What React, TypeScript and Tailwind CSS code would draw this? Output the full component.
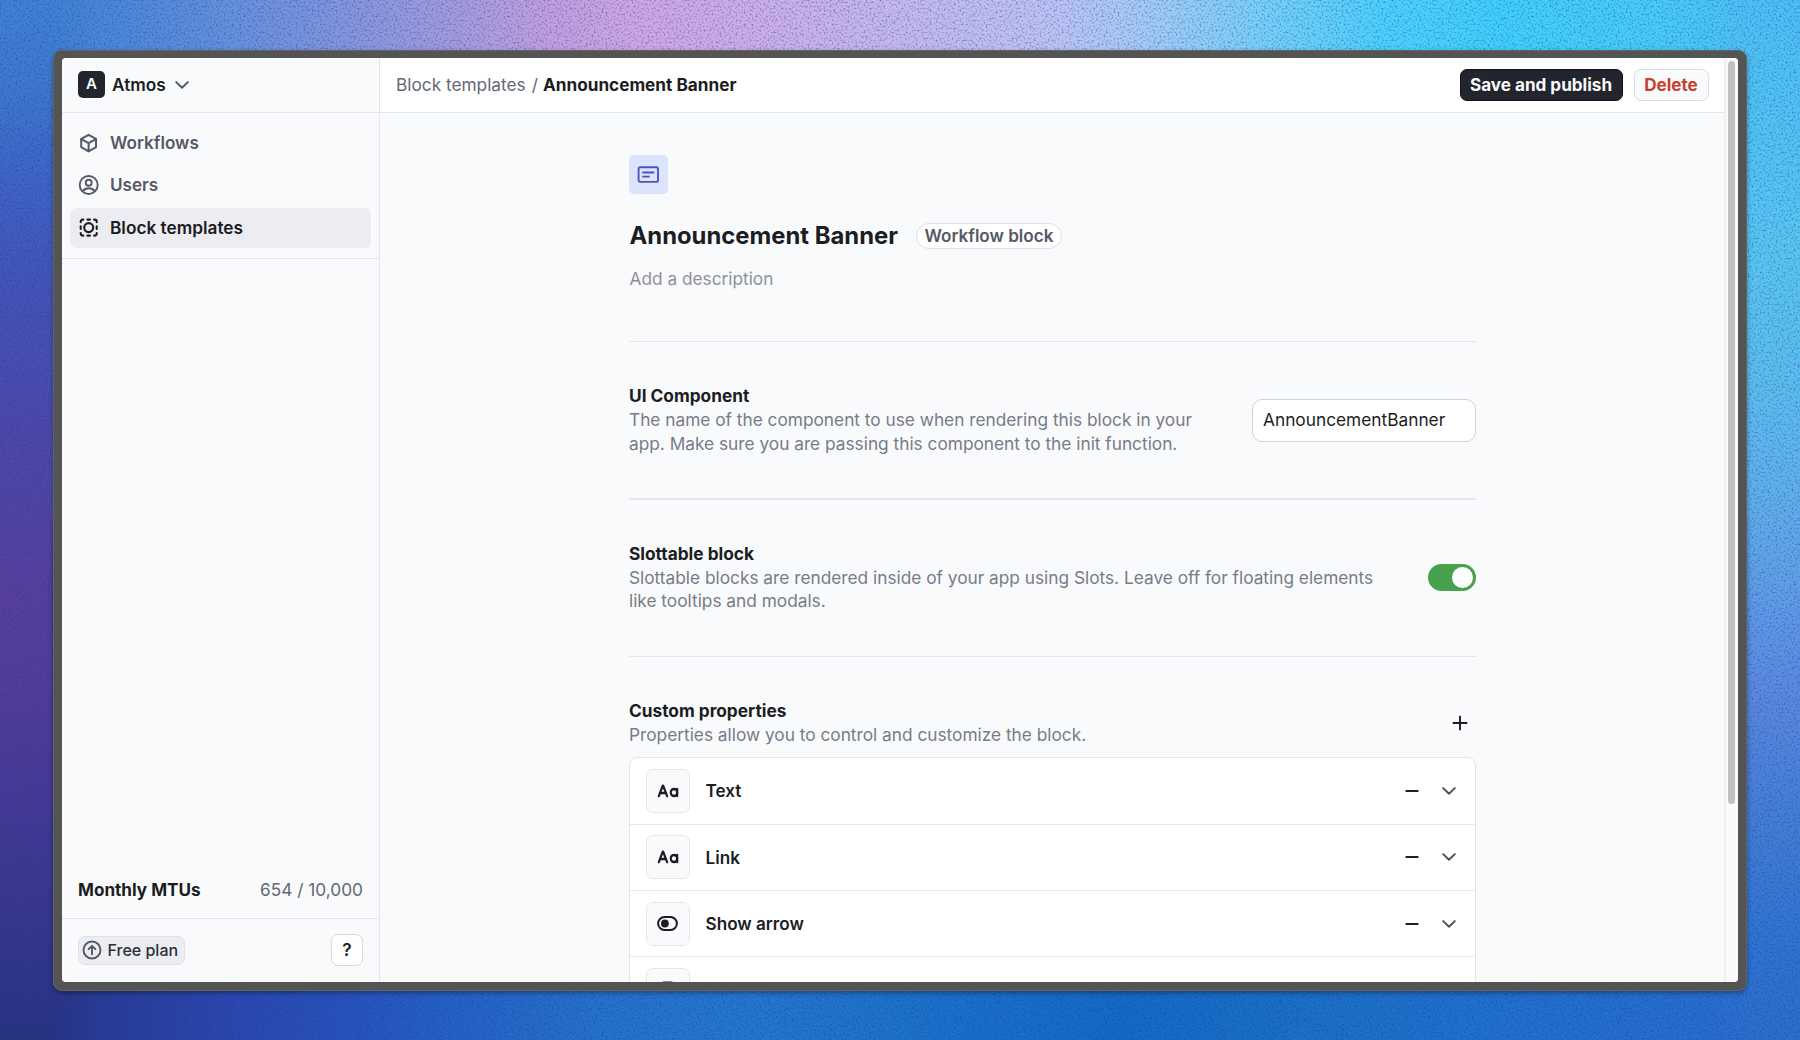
import type { ReactNode } from "react";
import { CaseSensitive } from "lucide-react";

function Backdrop() {
  return (
    <div className="pointer-events-none absolute inset-0 bg-[#2a6ecc]">
      <div className="absolute inset-x-0 top-0 h-1/2 bg-[linear-gradient(to_right,#3f82d4_0px,#4c88d8_120px,#6390da_220px,#7f95dc_330px,#a29bdc_450px,#c09edc_540px,#cfa8e2_650px,#cbb0e6_780px,#c4b8ea_900px,#bcc4f2_1060px,#9fccf4_1160px,#74d0f8_1270px,#4ed0fa_1380px,#40d0fa_1500px,#48ccf6_1650px,#4cc0f4_1800px)]" />
      <div className="absolute inset-x-0 bottom-0 h-1/2 bg-[linear-gradient(to_right,#27337f_0px,#283b94_100px,#2a46ac_220px,#2654bc_360px,#2462c4_460px,#2472ca_600px,#2476cc_750px,#1a70c8_950px,#146ac6_1120px,#1a70c4_1300px,#1f70cc_1480px,#246ecc_1650px,#2a6ecc_1800px)]" />
      <div className="absolute inset-y-0 left-0 w-24 bg-[linear-gradient(to_bottom,#3f82d4_0px,#3e7ace_80px,#3e64c6_180px,#4454b8_280px,#4c48a8_430px,#573f9a_600px,#533c98_690px,#483a94_780px,#3b388e_880px,#27337f_1040px)] [mask-image:linear-gradient(to_right,black_50%,transparent)]" />
      <div className="absolute inset-y-0 right-0 w-24 bg-[linear-gradient(to_bottom,#4cc0f4_0px,#50c3f2_100px,#58c6f0_250px,#5cbcec_400px,#60b0e8_500px,#5f9ae4_610px,#5a88de_700px,#4680d6_800px,#2f74d0_940px,#2a6ecc_1040px)] [mask-image:linear-gradient(to_left,black_50%,transparent)]" />
      <svg className="absolute inset-0 size-full" aria-hidden="true">
        <filter id="grain" x="0" y="0" width="100%" height="100%" colorInterpolationFilters="sRGB">
          <feTurbulence type="fractalNoise" baseFrequency="0.5" numOctaves="2" seed="7" />
          <feColorMatrix values="0 0 0 0 0.12  0 0 0 0 0.2  0 0 0 0 0.62  1.3 0 0 0 -0.62" />
        </filter>
        <rect width="100%" height="100%" filter="url(#grain)" />
      </svg>
    </div>
  );
}

function Chevron({ className }: { className: string }) {
  return (
    <svg viewBox="0 0 14 8" fill="none" stroke="currentColor" strokeWidth="2" strokeLinecap="round" strokeLinejoin="round" className={className}>
      <path d="M1.2 1.1 7 6.7l5.8-5.6" />
    </svg>
  );
}

function CubeIcon() {
  return (
    <svg viewBox="0 0 22 22" fill="none" stroke="currentColor" strokeWidth="2" strokeLinejoin="round" strokeLinecap="round" className="size-[22px]">
      <path d="M10.6 2.8 18 6.9v8.2l-7.4 4.3-7.4-4.3V6.9z" />
      <path d="m3.4 7.1 7.2 4 7.2-4M10.6 11.1v8" />
    </svg>
  );
}

function UserIcon() {
  return (
    <svg viewBox="0 0 22 22" fill="none" stroke="currentColor" strokeWidth="1.9" className="size-[22px]">
      <circle cx="10.7" cy="11" r="9" />
      <circle cx="10.7" cy="8.7" r="3" />
      <path d="M4.7 17.2c1.4-1.9 3.5-2.9 6-2.9s4.6 1 6 2.9" />
    </svg>
  );
}

function BlockIcon() {
  return (
    <svg viewBox="0 0 22 22" fill="none" stroke="currentColor" strokeWidth="2.1" strokeLinecap="round" className="size-[22px]">
      <g transform="translate(-0.3 -0.4)">
        <circle cx="11" cy="11" r="4.5" />
        <path d="M3 5.6V5a2 2 0 0 1 2-2h.6M16.4 3h.6a2 2 0 0 1 2 2v.6M19 16.4v.6a2 2 0 0 1-2 2h-.6M5.6 19H5a2 2 0 0 1-2-2v-.6" />
        <path d="M9.7 3h2.6M9.7 19h2.6M3 9.7v2.6M19 9.7v2.6" />
      </g>
    </svg>
  );
}

function LetterIcon() {
  return <CaseSensitive className="size-[22px] translate-y-px scale-y-[1.12]" strokeWidth={2.4} />;
}

function ToggleIcon() {
  return (
    <svg viewBox="0 0 21 15" fill="none" className="h-[15px] w-[21px]">
      <rect x="1.1" y="1.1" width="18.8" height="12.8" rx="6.4" stroke="currentColor" strokeWidth="2" />
      <circle cx="7.9" cy="7.5" r="3.9" fill="currentColor" />
    </svg>
  );
}

function SquareIcon() {
  return (
    <svg viewBox="0 0 21 20" fill="none" stroke="currentColor" strokeWidth="2" className="h-5 w-[21px]">
      <rect x="4" y="2.5" width="13" height="15" rx="3" />
      <path d="M7 5h7" />
    </svg>
  );
}

function NavItem({ icon, label, active = false }: { icon: ReactNode; label: string; active?: boolean }) {
  return (
    <a
      className={
        active
          ? "flex h-[39.5px] items-center gap-2.5 rounded-[7px] bg-[#ecedf2] pl-2 font-semibold text-[#1b1d23]"
          : "flex h-[39.5px] items-center gap-2.5 rounded-[7px] pl-2 text-[17.1px] font-[560] text-[#545965]"
      }
    >
      {icon}
      <span>{label}</span>
    </a>
  );
}

function Sidebar() {
  return (
    <aside className="flex w-[318px] shrink-0 flex-col border-r border-[#e3e5e9] bg-[#f9fafc]">
      <div className="flex h-[55px] shrink-0 items-center border-b border-[#e3e5e9] pb-px pl-4">
        <div className="flex size-[27px] items-center justify-center rounded-[5px] bg-[#22252d] text-[15px] font-semibold text-white">A</div>
        <span className="ml-[7px] font-semibold text-[#1b1d23]">Atmos</span>
        <Chevron className="ml-[9px] h-2 w-3.5 text-[#545965]" />
      </div>
      <nav className="flex flex-col gap-[3px] border-b border-[#e3e5e9] px-2 pt-2.5 pb-[10.5px]">
        <NavItem icon={<CubeIcon />} label="Workflows" />
        <NavItem icon={<UserIcon />} label="Users" />
        <NavItem icon={<BlockIcon />} label="Block templates" active />
      </nav>
      <div className="mt-auto flex h-14 items-center justify-between px-4">
        <span className="text-[17.1px] font-bold text-[#1b1d23]">Monthly MTUs</span>
        <span className="text-[#636874]">654 / 10,000</span>
      </div>
      <div className="flex h-16 items-center justify-between border-t border-[#e3e5e9] px-4 pb-px">
        <div className="flex h-[29px] w-[107px] items-center gap-[5.5px] rounded-[7px] border border-[#dfe1e6] bg-[#ecedf2] pl-[3px] text-base font-medium whitespace-nowrap text-[#2c2f38]">
          <svg viewBox="0 0 20 20" fill="none" stroke="#545965" strokeWidth="1.9" strokeLinecap="round" strokeLinejoin="round" className="size-5 shrink-0">
            <circle cx="10" cy="10" r="8.5" />
            <path d="M10 14.2V6M6.6 9.2 10 5.8l3.4 3.4" />
          </svg>
          Free plan
        </div>
        <button className="flex size-8 items-center justify-center rounded-[7px] border border-[#d5d8de] bg-white font-semibold text-[#1b1d23]">?</button>
      </div>
    </aside>
  );
}

function TopBar() {
  return (
    <header className="flex h-[55px] shrink-0 items-center border-b border-[#e3e5ec] bg-white pr-[15.5px] pb-px pl-4">
      <span className="text-[#636874]">Block templates</span>
      <span className="ml-1.5 text-[#636874]">/</span>
      <span className="ml-[5px] text-[17.2px] font-bold text-[#1b1d23]">Announcement Banner</span>
      <div className="ml-auto flex gap-[11px]">
        <button className="h-8 w-[163px] rounded-[7px] border border-[#101217] bg-[#22252d] text-[17.1px] font-bold whitespace-nowrap text-[#fafafa]">Save and publish</button>
        <button className="h-8 w-[75px] rounded-[7px] border border-[#dadce3] bg-[#f9fafc] text-[17.1px] font-bold text-[#c8402f]">Delete</button>
      </div>
    </header>
  );
}

function SettingText({ title, children }: { title: string; children: ReactNode }) {
  return (
    <div className="pl-[0.5px] text-[17.28px] leading-[23.9px]">
      <h2 className="font-bold text-[#1b1d23]">{title}</h2>
      <p className="whitespace-nowrap text-[#777c87]">{children}</p>
    </div>
  );
}

function PropertyRow({ icon, label }: { icon: ReactNode; label?: string }) {
  return (
    <div className="flex h-[66.1px] shrink-0 items-center border-b border-[#e6e8ec] pr-[19px] pl-4">
      <div className="flex size-11 items-center justify-center rounded-[7px] border border-[#e5e7eb] bg-[#f9fafc] pl-[0.5px] text-[#1b1d23]">{icon}</div>
      {label && <span className="ml-4 text-[17.15px] font-[580] text-[#1b1d23]">{label}</span>}
      <svg viewBox="0 0 14 4" className="ml-auto h-1 w-3.5">
        <path d="M1.3 2h11.4" stroke="#1d1f25" strokeWidth="2" strokeLinecap="round" />
      </svg>
      <Chevron className="ml-[23px] h-2 w-3.5 text-[#4f535e]" />
    </div>
  );
}

function Content() {
  return (
    <main className="mx-auto flex min-h-0 w-[847px] flex-1 flex-col overflow-hidden pt-[42px]">
      <div className="flex size-[39px] shrink-0 items-center justify-center rounded-[5px] bg-[#dce4fd]">
        <svg viewBox="0 0 22 18" fill="none" stroke="#4856b8" className="h-[18px] w-[22px]">
          <rect x="1.6" y="1.3" width="19.4" height="14.6" rx="1.6" strokeWidth="1.9" />
          <path d="M5.3 6.5h12M5.3 10.6h7.4" strokeWidth="1.9" />
        </svg>
      </div>
      <div className="mt-[27px] flex h-[30px] shrink-0 items-center pl-px">
        <h1 className="text-[23.85px] font-bold text-[#1b1d23]">Announcement Banner</h1>
        <span className="ml-[18px] flex h-[26px] w-[146px] items-center justify-center rounded-full border border-[#dfe1e6] bg-white text-[17.1px] font-[560] whitespace-nowrap text-[#545965]">
          Workflow block
        </span>
      </div>
      <p className="mt-4 h-6 shrink-0 pl-px leading-6 text-[#8f9196]">Add a description</p>

      <section className="mt-[50px] flex h-[158px] shrink-0 items-center justify-between border-t border-[#e4e6ea] pb-px">
        <SettingText title="UI Component">
          The name of the component to use when rendering this block in your
          <br />
          app. Make sure you are passing this component to the init function.
        </SettingText>
        <div className="flex h-[43px] w-[224px] items-center rounded-[10px] border border-[#d0d3da] bg-white pl-[10.5px] text-[17.3px] text-[#1b1d23]">AnnouncementBanner</div>
      </section>

      <section className="-mt-px flex h-[158px] shrink-0 items-center justify-between border-t-2 border-[#e5e7ed] pb-px">
        <SettingText title="Slottable block">
          Slottable blocks are rendered inside of your app using Slots. Leave off for floating elements
          <br />
          like tooltips and modals.
        </SettingText>
        <div className="flex h-[27px] w-12 items-center justify-end rounded-full bg-[#48a14d] pr-[2.3px]">
          <div className="size-[21.4px] rounded-full bg-white" />
        </div>
      </section>

      <section className="shrink-0 border-t border-[#e4e6ea] pt-[42px]">
        <div className="flex items-center justify-between">
          <SettingText title="Custom properties">Properties allow you to control and customize the block.</SettingText>
          <svg viewBox="0 0 16 16" className="mr-2 size-4">
            <path d="M8 .7v14.6M.7 8h14.6" stroke="#1b1d23" strokeWidth="1.9" />
          </svg>
        </div>
        <div className="mt-[10px] flex flex-col rounded-t-[8px] border border-[#e3e5ea] bg-white pt-px">
          <PropertyRow icon={<LetterIcon />} label="Text" />
          <PropertyRow icon={<LetterIcon />} label="Link" />
          <PropertyRow icon={<ToggleIcon />} label="Show arrow" />
          <PropertyRow icon={<SquareIcon />} />
        </div>
      </section>
    </main>
  );
}

export default function App() {
  return (
    <div className="relative h-[1040px] w-[1800px] overflow-hidden pt-[49.5px] pl-[53px] font-['Inter',sans-serif] text-[17.25px]">
      <Backdrop />
      <div className="relative h-[941.5px] w-[1693.5px] rounded-[9px] bg-[#545454] pt-[8.5px] pr-[8.5px] pb-[9px] pl-[9px] shadow-[0_2px_5px_rgba(0,0,0,0.35),inset_0_0_0_0.7px_#6a6a6a]">
        <div className="flex h-[924px] w-[1676px] overflow-hidden rounded-[4px] bg-[#f9fafc]">
          <Sidebar />
          <div className="flex min-w-0 flex-1 flex-col">
            <TopBar />
            <Content />
          </div>
          <div className="w-3.5 shrink-0 border-l-2 border-[#efefef] bg-[#fafafa] pt-[3px] pl-[2px]">
            <div className="h-[743px] w-[7px] rounded-full bg-[#c1c1c1]" />
          </div>
        </div>
      </div>
    </div>
  );
}
